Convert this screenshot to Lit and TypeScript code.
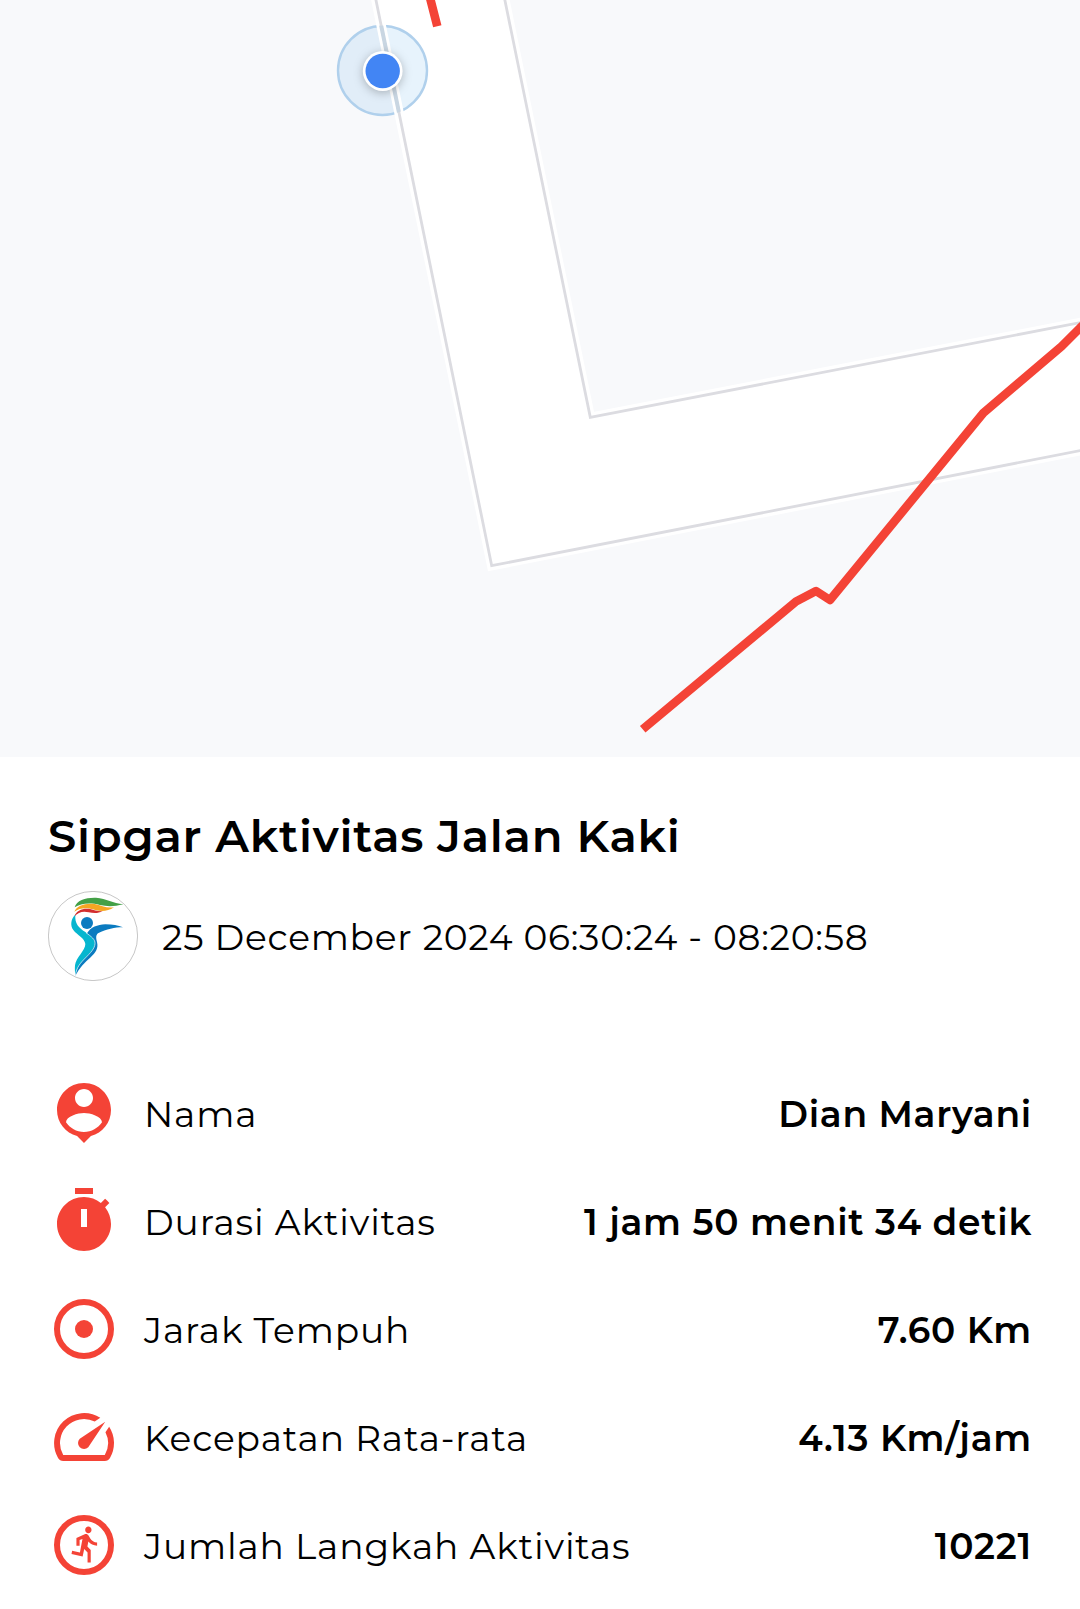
import { LitElement, html, css, svg } from 'lit';
import { customElement, property } from 'lit/decorators.js';

const icons: Record<string, unknown> = {
    person: svg`<path d="M12 2c-4.97 0-9 4.03-9 9 0 4.17 2.84 7.67 6.69 8.69L12 22l2.31-2.31C18.16 18.67 21 15.17 21 11c0-4.97-4.03-9-9-9zm0 2c1.66 0 3 1.34 3 3s-1.34 3-3 3-3-1.34-3-3 1.34-3 3-3zm0 14.3c-2.5 0-4.71-1.28-6-3.22.03-1.99 4-3.08 6-3.08 1.99 0 5.97 1.09 6 3.08-1.29 1.94-3.5 3.22-6 3.22z"/>`,
    timer: svg`<path d="M15 1H9v2h6V1zm4.03 6.39l1.42-1.42c-.43-.51-.9-.99-1.41-1.41l-1.42 1.42C16.07 4.74 14.12 4 12 4c-4.97 0-9 4.03-9 9s4.02 9 9 9 9-4.03 9-9c0-2.12-.74-4.07-1.97-5.61zM13 14h-2V8h2v6z"/>`,
    distance: svg`<circle class="ring" cx="12" cy="12" r="9"/><circle cx="12" cy="12" r="3"/>`,
    speed: svg`<path d="M20.38 8.57l-1.23 1.85a8 8 0 0 1-.22 7.58H5.07A8 8 0 0 1 15.58 6.85l1.85-1.23A10 10 0 0 0 3.35 19a2 2 0 0 0 1.72 1h13.85a2 2 0 0 0 1.74-1 10 10 0 0 0-.27-10.44zm-9.79 6.84a2 2 0 0 0 2.83 0l5.66-8.49-8.49 5.66a2 2 0 0 0 0 2.83z"/>`,
    steps: svg`<circle class="ring" cx="12" cy="12" r="9"/>
        <path transform="translate(6.3 5.05) scale(.53 .555)" d="M13.49 5.48c1.1 0 2-.9 2-2s-.9-2-2-2-2 .9-2 2 .9 2 2 2zm-3.6 13.9l1-4.4 2.1 2v6h2v-7.5l-2.1-2 .6-3c1.3 1.5 3.3 2.5 5.5 2.5v-2c-1.9 0-3.5-1-4.3-2.4l-1-1.6c-.4-.6-1-1-1.7-1-.3 0-.5.1-.8.1l-5.2 2.2v4.7h2v-3.4l1.8-.7-1.6 8.1-4.9-1-.4 2 7 1.4z"/>`,
};

@customElement('route-map')
export class RouteMap extends LitElement {
    static styles = css`
        :host {
            display: block;
            height: 757px;
            background: #f8f9fb;
        }

        svg {
            display: block;
        }

        .road { fill: #fff; }
        .casing { fill: none; stroke: #fff; stroke-width: 9.5; }
        .edge { fill: none; stroke: #dcdce1; stroke-width: 2.8; }
        .edge-tinted { fill: none; stroke: #c9d6e2; stroke-width: 4; }
        .accuracy { fill: rgba(66, 165, 235, 0.13); stroke: #b0d0ec; stroke-width: 2.4; }
        .route { fill: none; stroke: #f44336; stroke-width: 8.6; stroke-linejoin: round; }
        .halo { fill: #fff; filter: drop-shadow(0 2px 5px rgba(0, 0, 0, 0.25)); }
        .dot { fill: #4285f4; }
    `;

    render() {
        return html`
            <svg width="1080" height="757" viewBox="0 0 1080 757">
                <defs>
                    <clipPath id="area"><circle cx="382.5" cy="70.5" r="45"/></clipPath>
                </defs>
                <path class="road" d="M376 0L491.7 565.7L1080 450.7V322.7L590.3 417.3L504.8 0z"/>
                <circle class="accuracy" cx="382.5" cy="70.5" r="44.5"/>
                <path class="casing" d="M373.9 -10L491.7 565.7L1090 448.7M502.8 -10L590.3 417.3L1090 320.7"/>
                <path class="edge" d="M373.9 -10L491.7 565.7L1090 448.7M502.8 -10L590.3 417.3L1090 320.7"/>
                <path class="edge-tinted" clip-path="url(#area)" d="M373.9 -10L491.7 565.7"/>
                <path class="route" d="M428 -10L437.3 26.3M1095 314L1080 328L1061.7 346.3L983.3 413L830 600L816 591L796 601.5L642.7 729.3"/>
                <circle class="halo" cx="382.7" cy="71" r="19.9"/>
                <circle class="dot" cx="382.7" cy="71" r="17.2"/>
            </svg>
        `;
    }
}

@customElement('activity-row')
export class ActivityRow extends LitElement {
    static styles = css`
        :host {
            display: flex;
            align-items: center;
            height: 108px;
            color: #000;
            font-size: 36px;
            letter-spacing: 0.75px;
        }

        svg {
            width: 72px;
            height: 72px;
            margin-right: 24px;
            fill: #f44336;
        }

        .ring {
            fill: none;
            stroke: #f44336;
            stroke-width: 2;
        }

        .label,
        .value {
            padding-top: 2px;
        }

        .label {
            flex: 1;
            font-weight: 400;
            letter-spacing: 0.85px;
        }

        .value {
            font-weight: 600;
        }
    `;

    @property() icon = '';
    @property() label = '';
    @property() value = '';

    render() {
        return html`
            <svg viewBox="0 0 24 24">${icons[this.icon]}</svg>
            <span class="label">${this.label}</span>
            <span class="value">${this.value}</span>
        `;
    }
}

@customElement('app-root')
export class AppRoot extends LitElement {
    static styles = css`
        :host {
            display: block;
            height: 1609px;
            overflow: hidden;
            background: #fff;
            color: #000;
            font-family: Montserrat, Inter, sans-serif;
        }

        .details {
            padding: 51px 48px 0;
        }

        h1 {
            margin: 0;
            font-size: 45px;
            line-height: 56px;
            font-weight: 600;
            letter-spacing: 0.75px;
        }

        .when {
            display: flex;
            align-items: center;
            gap: 24px;
            margin: 27px 0 78px;
            font-size: 36px;
            font-weight: 400;
            letter-spacing: 0.75px;
        }

        .date {
            padding-top: 2px;
        }

        .logo {
            width: 90px;
            height: 90px;
        }
    `;

    rows = [
        { icon: 'person', label: 'Nama', value: 'Dian Maryani' },
        { icon: 'timer', label: 'Durasi Aktivitas', value: '1 jam 50 menit 34 detik' },
        { icon: 'distance', label: 'Jarak Tempuh', value: '7.60 Km' },
        { icon: 'speed', label: 'Kecepatan Rata-rata', value: '4.13 Km/jam' },
        { icon: 'steps', label: 'Jumlah Langkah Aktivitas', value: '10221' },
    ];

    renderLogo() {
        return html`
            <svg class="logo" viewBox="24 33 270 270">
                <circle cx="159" cy="168" r="133.8" fill="#fff" stroke="#a0a0a0" stroke-width="1.8"/>
                <path fill="#43a047" d="M104 82C110 60 138 52 168 53C200 55 218 70 250 73C222 80 202 80 180 75C150 67 122 70 104 82z"/>
                <path fill="#f5a623" d="M103 95C110 76 138 68 164 72C184 76 198 85 222 82C204 94 184 95 166 90C142 82 120 83 103 95z"/>
                <path fill="#d32f2f" d="M103 110C108 91 130 84 150 87C162 89 172 95 188 94C174 101 160 100 146 97C128 93 114 97 103 110z"/>
                <circle cx="141" cy="129" r="18" fill="#0b7bc0"/>
                <path fill="#0b7bc0" d="M141 160C152 142 172 134 196 133C218 133 234 137 249 142C224 142 200 147 174 160C167 166 168 174 171 186C176 206 166 218 152 232C134 248 118 264 106 287C105 262 110 248 126 234C142 218 152 206 160 184z"/>
                <path fill="#06b6cf" d="M106 104C91 118 91 138 100 150C112 166 134 174 136 192C136 212 108 232 105 256C104 268 105 278 106 286C110 262 122 248 136 234C152 218 164 206 165 190C165 176 150 168 136 156C116 142 104 132 106 104z"/>
                <path fill="none" stroke="#fff" stroke-width="2" d="M138 158C154 170 166 178 165 191C164 206 152 218 136 234C120 250 110 262 106 286"/>
            </svg>
        `;
    }

    render() {
        return html`
            <route-map></route-map>
            <div class="details">
                <h1>Sipgar Aktivitas Jalan Kaki</h1>
                <div class="when">
                    ${this.renderLogo()}
                    <span class="date">25 December 2024 06:30:24 - 08:20:58</span>
                </div>
                ${this.rows.map((row) => html`
                    <activity-row icon=${row.icon} label=${row.label} value=${row.value}></activity-row>
                `)}
            </div>
        `;
    }
}
